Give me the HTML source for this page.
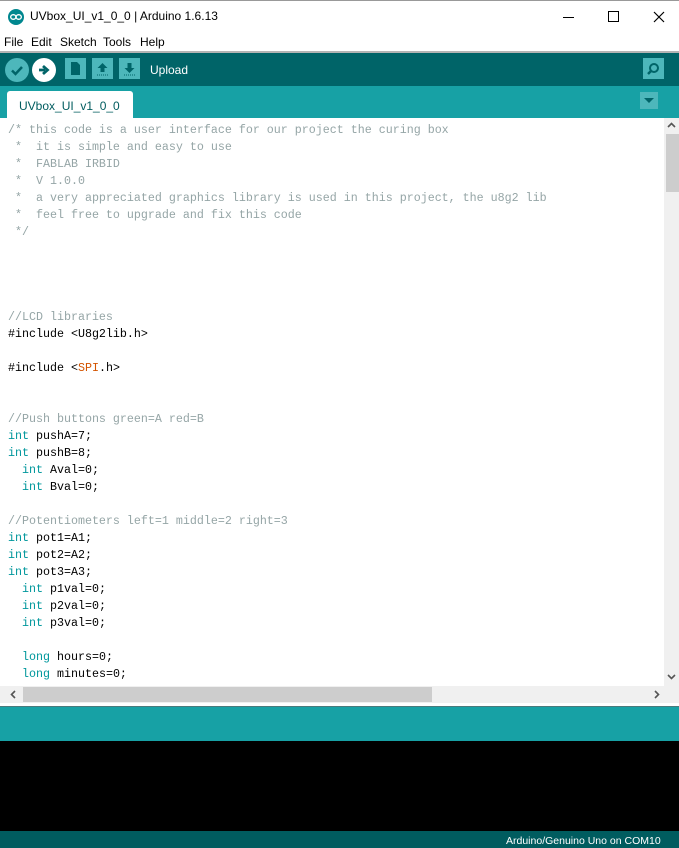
<!DOCTYPE html>
<html><head><meta charset="utf-8"><style>
*{margin:0;padding:0;box-sizing:border-box}
body{width:679px;height:848px;overflow:hidden;background:#fff;font-family:"Liberation Sans",sans-serif;position:relative}
.abs{position:absolute}
#title{top:0;left:0;width:679px;height:31px;background:#fff;border-top:1px solid #999}
#title .t{left:30px;top:8px;font-size:12px;color:#000}
#menu{top:31px;left:0;width:679px;height:20px;font-size:12px;color:#000}
#menu span{position:absolute;top:4px}
#line1{top:51px;left:0;width:679px;height:2px;background:#b4b4b4}
#tool{top:53px;left:0;width:679px;height:33px;background:#006468}
.circ{width:24px;height:24px;border-radius:50%;top:5px}
.sq{width:21px;height:21px;background:#4db7bb;top:5px}
#tabs{top:86px;left:0;width:679px;height:32px;background:#17a1a5}
#tab{left:7px;top:5px;width:126px;height:27px;background:#fff;border-radius:3px 3px 0 0;font-size:12px;color:#005c5f;padding:8px 0 0 12px}
#ed{top:118px;left:0;width:664px;height:568px;background:#fff;overflow:hidden}
pre{position:absolute;left:8px;top:4px;font-family:"Liberation Mono",monospace;font-size:11.67px;line-height:17px;color:#000}
.c{color:#95a5a6}.k{color:#00979c}.o{color:#d35400}
#vs{top:118px;left:664px;width:15px;height:568px;background:#f0f0f0}
#hs{top:686px;left:0;width:679px;height:17px;background:#f0f0f0}
#con1{top:706px;left:0;width:679px;height:35px;background:#17a1a5;border-top:1px solid #4a7a7c}
#con2{top:741px;left:0;width:679px;height:90px;background:#000}
#stat{top:831px;left:0;width:679px;height:17px;background:#005c5f;color:#fff;font-size:10.5px}
</style></head><body>
<div id="title" class="abs">
<svg class="abs" style="left:8px;top:8px" width="16" height="16" viewBox="0 0 16 16"><circle cx="8" cy="8" r="8" fill="#00878f"/><ellipse cx="5.3" cy="8" rx="2.6" ry="2.3" fill="none" stroke="#fff" stroke-width="1.4"/><ellipse cx="10.7" cy="8" rx="2.6" ry="2.3" fill="none" stroke="#fff" stroke-width="1.4"/></svg>
<div class="abs t">UVbox_UI_v1_0_0 | Arduino 1.6.13</div>
<div class="abs" style="left:563px;top:16px;width:11px;height:1px;background:#000"></div>
<div class="abs" style="left:608px;top:10px;width:11px;height:11px;border:1px solid #000"></div>
<svg class="abs" style="left:653px;top:10px" width="12" height="12"><path d="M1 1L11 11M11 1L1 11" stroke="#000" stroke-width="1.2"/></svg>
</div>
<div id="menu" class="abs"><span style="left:4px">File</span><span style="left:31px">Edit</span><span style="left:60px">Sketch</span><span style="left:103px">Tools</span><span style="left:140px">Help</span></div>
<div id="line1" class="abs"></div>
<div id="tool" class="abs">
<div class="abs circ" style="left:5px;background:#4db7bb"><svg width="24" height="24"><path d="M7 12.5L10.5 16L17 9" stroke="#006468" stroke-width="2.5" fill="none"/></svg></div>
<div class="abs circ" style="left:32px;background:#fff"><svg width="24" height="24"><path d="M7 12H13M11 8L15.5 12L11 16" stroke="#006468" stroke-width="2.8" fill="none"/></svg></div>
<div class="abs sq" style="left:65px"><svg width="21" height="21"><path d="M6 4H12L15 7V17H6Z" fill="#006468"/></svg></div>
<div class="abs sq" style="left:92px"><svg width="21" height="21"><path d="M10.5 5L15.5 10H12.5V14H8.5V10H5.5Z" fill="#006468"/><path d="M5 17H16" stroke="#006468" stroke-dasharray="1 1"/></svg></div>
<div class="abs sq" style="left:119px"><svg width="21" height="21"><path d="M10.5 15L15.5 10H12.5V5H8.5V10H5.5Z" fill="#006468"/><path d="M5 17H16" stroke="#006468" stroke-dasharray="1 1"/></svg></div>
<div class="abs" style="left:150px;top:10px;color:#fff;font-size:12px">Upload</div>
<div class="abs sq" style="left:643px;background:#4db7bb"><svg width="21" height="21"><circle cx="11" cy="10" r="4" fill="none" stroke="#006468" stroke-width="2"/><path d="M8 13L5 16" stroke="#006468" stroke-width="2.5"/></svg></div>
</div>
<div id="tabs" class="abs"><div id="tab" class="abs">UVbox_UI_v1_0_0</div>
<div class="abs" style="left:640px;top:6px;width:18px;height:17px;background:#4db7bb"><svg width="18" height="17"><path d="M4 6H14L9 11Z" fill="#006468"/></svg></div></div>
<div id="ed" class="abs"><pre><span class="c">/* this code is a user interface for our project the curing box
 *  it is simple and easy to use
 *  FABLAB IRBID
 *  V 1.0.0
 *  a very appreciated graphics library is used in this project, the u8g2 lib
 *  feel free to upgrade and fix this code
 */</span>




<span class="c">//LCD libraries</span>
#include &lt;U8g2lib.h&gt;

#include &lt;<span class="o">SPI</span>.h&gt;


<span class="c">//Push buttons green=A red=B</span>
<span class="k">int</span> pushA=7;
<span class="k">int</span> pushB=8;
  <span class="k">int</span> Aval=0;
  <span class="k">int</span> Bval=0;

<span class="c">//Potentiometers left=1 middle=2 right=3</span>
<span class="k">int</span> pot1=A1;
<span class="k">int</span> pot2=A2;
<span class="k">int</span> pot3=A3;
  <span class="k">int</span> p1val=0;
  <span class="k">int</span> p2val=0;
  <span class="k">int</span> p3val=0;

  <span class="k">long</span> hours=0;
  <span class="k">long</span> minutes=0;</pre></div>
<div id="vs" class="abs"><div class="abs" style="left:2px;top:16px;width:13px;height:58px;background:#cdcdcd"></div>
<svg class="abs" style="left:3px;top:4px" width="9" height="7"><path d="M1 5L4.5 1.5L8 5" stroke="#555" stroke-width="1.6" fill="none"/></svg>
<svg class="abs" style="left:3px;top:555px" width="9" height="7"><path d="M1 2L4.5 5.5L8 2" stroke="#555" stroke-width="1.6" fill="none"/></svg></div>
<div id="hs" class="abs"><div class="abs" style="left:23px;top:1px;width:409px;height:15px;background:#cdcdcd"></div>
<svg class="abs" style="left:10px;top:4px" width="7" height="9"><path d="M5 1L1.5 4.5L5 8" stroke="#555" stroke-width="1.6" fill="none"/></svg>
<svg class="abs" style="left:653px;top:4px" width="7" height="9"><path d="M2 1L5.5 4.5L2 8" stroke="#555" stroke-width="1.6" fill="none"/></svg></div>
<div id="con1" class="abs"></div>
<div id="con2" class="abs"></div>
<div id="stat" class="abs"><div class="abs" style="left:506px;top:4px">Arduino/Genuino Uno on COM10</div></div>
</body></html>
